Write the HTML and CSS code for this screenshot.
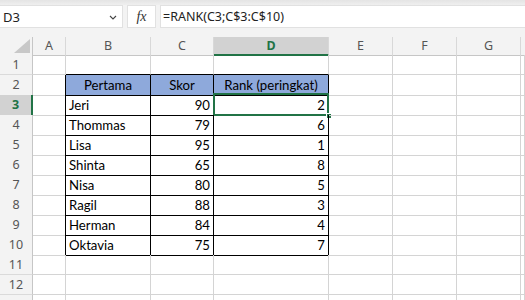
FILE: index.html
```html
<!DOCTYPE html>
<html>
<head>
<meta charset="utf-8">
<link rel="stylesheet" href="styles.css">
</head>
<body>
<div class="app">
  <div class="topstrip"></div>
  <div class="fbar">
    <div class="namebox"><span class="nb-text">D3</span>
      <svg class="chev" width="8" height="5" viewBox="0 0 8 5"><path d="M1 1 L4 4 L7 1" fill="none" stroke="#444" stroke-width="1.1"/></svg>
    </div>
    <div class="fxbox"><span class="fx">fx</span></div>
    <div class="formula">=RANK(C3;C$3:C$10)</div>
  </div>
  <div class="gap"></div>
  <div class="sheet">
    <div class="row hdr">
      <div class="corner"><svg width="16" height="14" viewBox="0 0 16 14"><path d="M16 0 L16 14 L0 14 Z" fill="#c8c8c8"/></svg></div>
      <div class="ch">A</div><div class="ch">B</div><div class="ch">C</div><div class="ch sel">D</div><div class="ch">E</div><div class="ch">F</div><div class="ch">G</div><div class="ch last"></div>
    </div>
    <div class="row">
      <div class="rh">1</div><div class="c"></div><div class="c tb-top"></div><div class="c tb-top"></div><div class="c tb-top"></div><div class="c"></div><div class="c"></div><div class="c"></div><div class="c"></div>
    </div>
    <div class="row">
      <div class="rh">2</div><div class="c tb-left"></div><div class="c t th">Pertama</div><div class="c t th">Skor</div><div class="c t th">Rank (peringkat)</div><div class="c"></div><div class="c"></div><div class="c"></div><div class="c"></div>
    </div>
    <div class="row">
      <div class="rh rsel">3</div><div class="c tb-left"></div><div class="c t">Jeri</div><div class="c t n">90</div><div class="c t n active">2<span class="selbox"></span><span class="handle"></span></div><div class="c"></div><div class="c"></div><div class="c"></div><div class="c"></div>
    </div>
    <div class="row">
      <div class="rh">4</div><div class="c tb-left"></div><div class="c t">Thommas</div><div class="c t n">79</div><div class="c t n">6</div><div class="c"></div><div class="c"></div><div class="c"></div><div class="c"></div>
    </div>
    <div class="row">
      <div class="rh">5</div><div class="c tb-left"></div><div class="c t">Lisa</div><div class="c t n">95</div><div class="c t n">1</div><div class="c"></div><div class="c"></div><div class="c"></div><div class="c"></div>
    </div>
    <div class="row">
      <div class="rh">6</div><div class="c tb-left"></div><div class="c t">Shinta</div><div class="c t n">65</div><div class="c t n">8</div><div class="c"></div><div class="c"></div><div class="c"></div><div class="c"></div>
    </div>
    <div class="row">
      <div class="rh">7</div><div class="c tb-left"></div><div class="c t">Nisa</div><div class="c t n">80</div><div class="c t n">5</div><div class="c"></div><div class="c"></div><div class="c"></div><div class="c"></div>
    </div>
    <div class="row">
      <div class="rh">8</div><div class="c tb-left"></div><div class="c t">Ragil</div><div class="c t n">88</div><div class="c t n">3</div><div class="c"></div><div class="c"></div><div class="c"></div><div class="c"></div>
    </div>
    <div class="row">
      <div class="rh">9</div><div class="c tb-left"></div><div class="c t">Herman</div><div class="c t n">84</div><div class="c t n">4</div><div class="c"></div><div class="c"></div><div class="c"></div><div class="c"></div>
    </div>
    <div class="row">
      <div class="rh">10</div><div class="c tb-left"></div><div class="c t">Oktavia</div><div class="c t n">75</div><div class="c t n">7</div><div class="c"></div><div class="c"></div><div class="c"></div><div class="c"></div>
    </div>
    <div class="row">
      <div class="rh">11</div><div class="c"></div><div class="c"></div><div class="c"></div><div class="c"></div><div class="c"></div><div class="c"></div><div class="c"></div><div class="c"></div>
    </div>
    <div class="row">
      <div class="rh">12</div><div class="c"></div><div class="c"></div><div class="c"></div><div class="c"></div><div class="c"></div><div class="c"></div><div class="c"></div><div class="c"></div>
    </div>
    <div class="row">
      <div class="rh"></div><div class="c"></div><div class="c"></div><div class="c"></div><div class="c"></div><div class="c"></div><div class="c"></div><div class="c"></div><div class="c"></div>
    </div>
  </div>
</div>
</body>
</html>
```
FILE: styles.css
```css
* { box-sizing: border-box; }
html, body { margin: 0; padding: 0; }
body { background: #ffffff; width: 525px; height: 300px; overflow: hidden; }
.app { width: 525px; height: 300px; overflow: hidden; background: #f3f3f3; }
.topstrip { height: 5px; background: linear-gradient(#e4e4e4, #efefef); }
.fbar { display: flex; height: 23px; background: #f3f3f3; }
.namebox { flex: 0 0 123px; height: 23px; background: #fff; border: 1px solid #e1e1e1; border-left: none; display: flex; align-items: center; justify-content: space-between; padding: 0 5px 0 3px; }
.nb-text { font-family: "Noto Sans", "Open Sans", sans-serif; font-size: 13px; color: #222; }
.chev { margin-top: 1px; }
.fxbox { flex: 0 0 29px; height: 23px; margin-left: 4px; background: #fff; border: 1px solid #e1e1e1; display: flex; align-items: center; justify-content: center; }
.fx { font-family: "Liberation Serif", "DejaVu Serif", serif; font-style: italic; font-size: 14px; color: #333; }
.formula { flex: 1 1 auto; margin-left: 4px; height: 23px; background: #fff; border: 1px solid #e1e1e1; border-right: none; font-family: "Noto Sans", "Open Sans", sans-serif; font-size: 12.5px; color: #222; padding-left: 2px; line-height: 21px; }
.gap { height: 9px; }
.sheet { background: #fff; }
.row { display: grid; grid-template-columns: 33px 33px 85px 63px 115px 64px 64px 64px 4px; height: 20px; }
.row.hdr { height: 18px; background: #f3f3f3; }
.corner { border-right: 1px solid #c6c6c6; border-bottom: 1px solid #c6c6c6; display: flex; align-items: flex-end; justify-content: flex-end; padding: 0 2px 2px 0; }
.ch { border-right: 1px solid #d8d8d8; border-bottom: 1px solid #c6c6c6; font-family: "Noto Sans", "Open Sans", sans-serif; font-size: 12.5px; color: #555; text-align: center; line-height: 17px; }
.ch.sel { background: #d2d2d2; color: #217346; font-weight: bold; border-bottom: 2px solid #217346; }
.ch.last { border-right: none; }
.rh { background: #f3f3f3; border-right: 1px solid #c6c6c6; border-bottom: 1px solid #dadada; font-family: "Noto Sans", "Open Sans", sans-serif; font-size: 12.5px; color: #555; text-align: center; line-height: 19px; }
.rh.rsel { background: #d2d2d2; color: #217346; font-weight: bold; border-right: 2px solid #217346; }
.c { border-right: 1px solid #d4d4d4; border-bottom: 1px solid #d4d4d4; position: relative; font-family: "Lato", "Liberation Sans", sans-serif; font-size: 13.2px; color: #000; line-height: 20px; white-space: nowrap; }
.c.t { border-right-color: #000; border-bottom-color: #000; padding: 0 3px; }
.c.tb-top { border-bottom-color: #000; }
.c.tb-left { border-right-color: #000; }
.c.th { background: #8ea9db; text-align: center; }
.c.n { text-align: right; }
.selbox { position: absolute; left: -1px; top: -2px; right: -1px; bottom: -1px; border: 2px solid #217346; }
.handle { position: absolute; right: -4px; bottom: -4px; width: 6px; height: 6px; background: #217346; border: 1px solid #fff; }
```
